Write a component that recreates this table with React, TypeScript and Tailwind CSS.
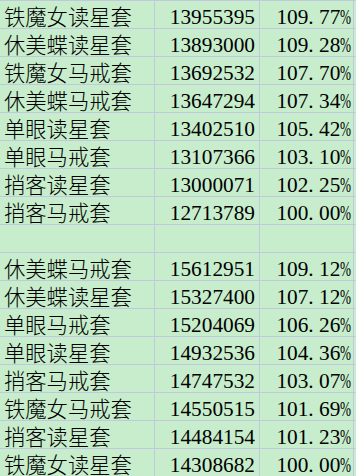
const rows: [string, string, string][] = [
  ['铁魔女读星套', '13955395', '109.77'],
  ['休美蝶读星套', '13893000', '109.28'],
  ['铁魔女马戒套', '13692532', '107.70'],
  ['休美蝶马戒套', '13647294', '107.34'],
  ['单眼读星套', '13402510', '105.42'],
  ['单眼马戒套', '13107366', '103.10'],
  ['捎客读星套', '13000071', '102.25'],
  ['捎客马戒套', '12713789', '100.00'],
  ['', '', ''],
  ['休美蝶马戒套', '15612951', '109.12'],
  ['休美蝶读星套', '15327400', '107.12'],
  ['单眼马戒套', '15204069', '106.26'],
  ['单眼读星套', '14932536', '104.36'],
  ['捎客马戒套', '14747532', '103.07'],
  ['铁魔女马戒套', '14550515', '101.69'],
  ['捎客读星套', '14484154', '101.23'],
  ['铁魔女读星套', '14308682', '100.00'],
];

const cjk = { fontFamily: '"Noto Sans CJK SC", sans-serif' };
const num = { fontFamily: '"Liberation Serif", serif' };

// half-width period and percent sign, like the sheet's font
function Percent({ value }: { value: string }) {
  if (!value) return null;
  const [a, b] = value.split('.');
  return (
    <span>
      {a}
      <span className="inline-block w-[10.7px] text-left">.</span>
      {b}
      <span className="inline-block w-[10.7px] text-left origin-left scale-x-[0.62]">%</span>
    </span>
  );
}

export default function App() {
  return (
    <div className="w-[356px] h-[476px] overflow-hidden bg-[#c7edcc] text-black">
      <div className="grid grid-cols-[155px_105px_94px_1fr] border-t border-[#bfc8dc]">
        {rows.map(([name, total, pct], i) => (
          <div key={i} className="contents">
            <div
              className="h-[28px] border-b border-r border-[#bfc8dc] pl-[4px] pt-[4px] text-[21.3px] leading-[21.3px] font-light whitespace-nowrap"
              style={cjk}
            >
              {name}
            </div>
            <div
              className="h-[28px] border-b border-r border-[#bfc8dc] pr-[4px] pt-[6px] text-right text-[21.3px] leading-[21.3px]"
              style={num}
            >
              {total}
            </div>
            <div
              className="h-[28px] border-b border-r border-[#bfc8dc] pr-[2px] pt-[6px] text-right text-[21.3px] leading-[21.3px] whitespace-nowrap"
              style={num}
            >
              <Percent value={pct} />
            </div>
            <div className="h-[28px] border-b border-[#bfc8dc]" />
          </div>
        ))}
      </div>
    </div>
  );
}
